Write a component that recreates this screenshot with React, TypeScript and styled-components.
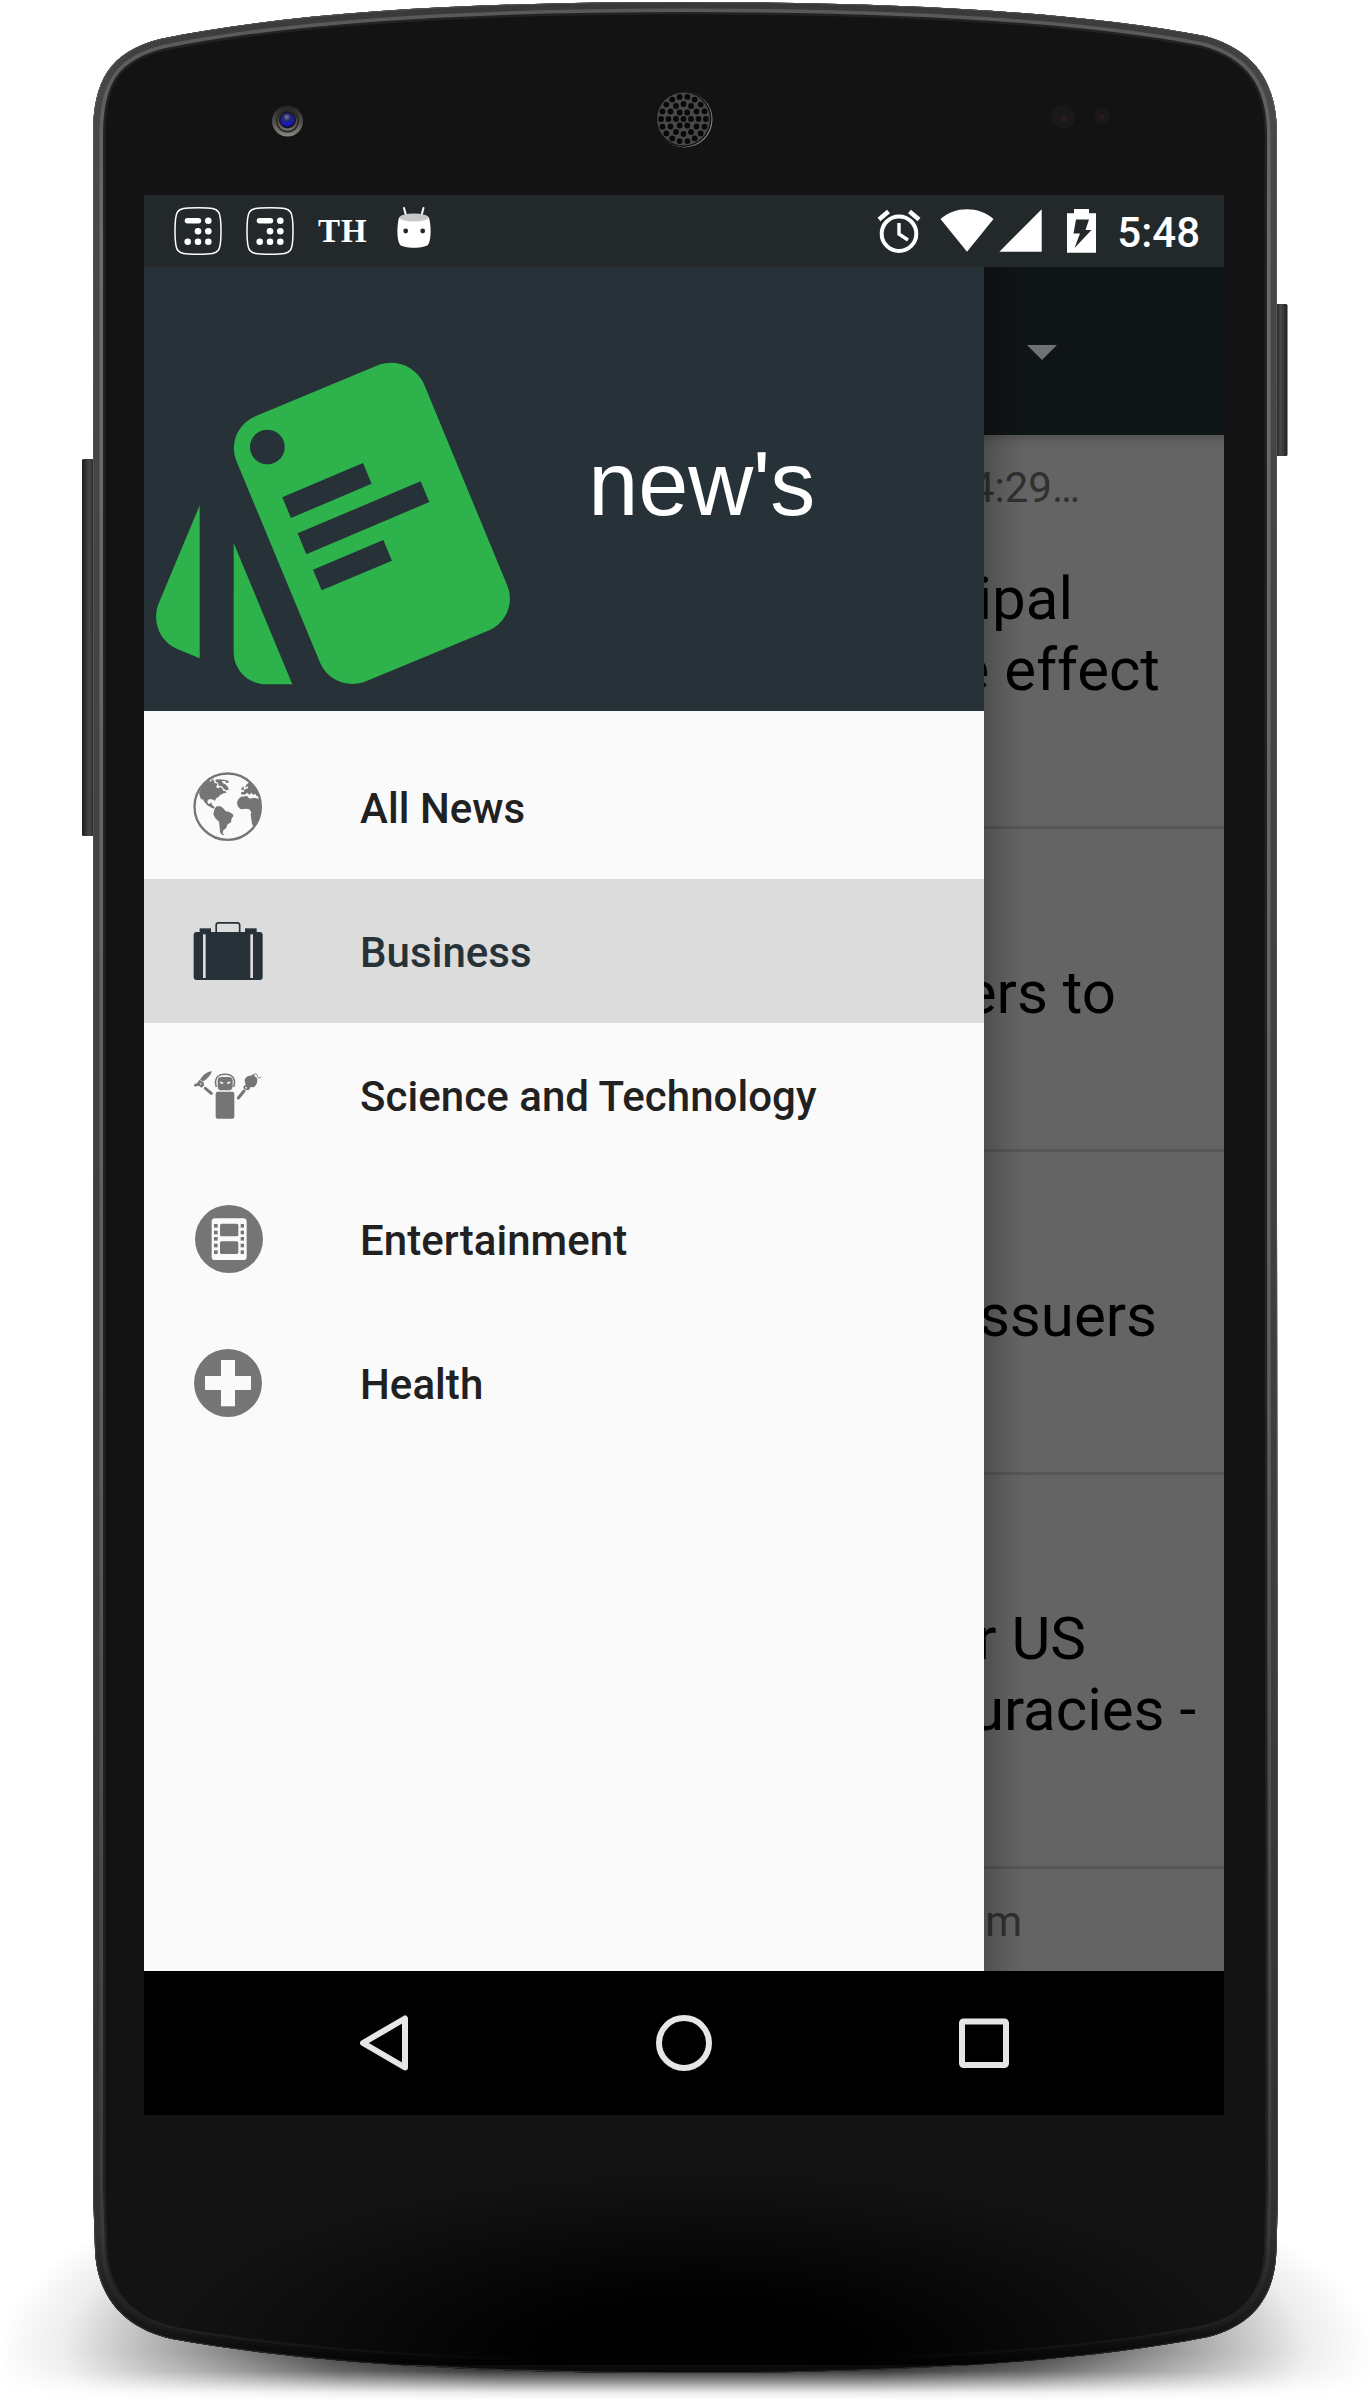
import React from 'react';
import styled, { createGlobalStyle } from 'styled-components';

const GlobalStyle = createGlobalStyle`
  *, *::before, *::after { box-sizing: border-box; }
  body { margin: 0; background: #fff; font-family: Roboto, 'Liberation Sans', sans-serif; }
`;

const Page = styled.main`
  position: relative;
  width: 1370px;
  height: 2405px;
  padding: 195px 146px 290px 144px;
  overflow: hidden;
  background: #fff;
`;

const DeviceArt = styled.svg`
  position: absolute;
  inset: 0;
  width: 1370px;
  height: 2405px;
`;

const Screen = styled.section`
  position: relative;
  display: flex;
  flex-direction: column;
  width: 1080px;
  height: 1920px;
  background: #646464;
`;

const StatusBar = styled.header`
  display: flex;
  justify-content: space-between;
  align-items: center;
  flex: 0 0 72px;
  padding: 0 24px 0 30px;
  background: #23282b;
  color: #fff;
`;

const StatusGroup = styled.div`
  display: flex;
  align-items: center;
  height: 72px;
`;

const StatusIcon = styled.svg<{ $w: number; $ml?: number }>`
  display: block;
  width: ${(p) => p.$w}px;
  height: 72px;
  margin-left: ${(p) => p.$ml ?? 0}px;
`;

const PaperMark = styled.span`
  margin-left: 24px;
  width: 52px;
  font: bold 33px/72px 'Liberation Serif', serif;
  letter-spacing: 1px;
`;

const Clock = styled.time`
  margin-left: 21px;
  font-size: 42px;
  font-weight: 500;
  line-height: 72px;
  padding-top: 3px;
`;

const Workspace = styled.div`
  display: flex;
  flex: 1;
  min-height: 0;
`;

const Drawer = styled.nav`
  flex: 0 0 840px;
  background: #fafafa;
`;

const DrawerHeader = styled.div`
  display: flex;
  height: 444px;
  padding: 95px 0 0 12px;
  background: #273238;
`;

const Logo = styled.svg`
  flex: none;
  width: 354.300px;
  height: 322.700px;
`;

const Brand = styled.h1`
  margin: 69px 0 0 78px;
  font-family: 'Liberation Sans', Arial, sans-serif;
  font-size: 90px;
  font-weight: 400;
  line-height: 106px;
  letter-spacing: -0.1px;
  color: #fff;
`;

const Menu = styled.ul`
  margin: 0;
  padding: 24px 0;
  list-style: none;
`;

const MenuItem = styled.li<{ $active?: boolean }>`
  display: flex;
  align-items: center;
  gap: 96px;
  height: 144px;
  padding: 0 48px;
  font-size: 42px;
  font-weight: 500;
  background: ${(p) => (p.$active ? '#dcdcdc' : 'transparent')};
  color: ${(p) => (p.$active ? '#263238' : '#212121')};
  svg { color: ${(p) => (p.$active ? '#263238' : '#757575')}; }
`;

const MenuLabel = styled.span`
  padding-top: 2px;
  letter-spacing: 0.05px;
`;

const MenuIcon = styled.svg`
  flex: none;
  width: 72px;
  height: 72px;
`;

const Content = styled.div`
  position: relative;
  display: flex;
  flex-direction: column;
  flex: 1;
  min-width: 0;
  overflow: hidden;
  background: #646464;

  &::after {
    content: '';
    position: absolute;
    inset: 0 auto 0 0;
    width: 42px;
    background: linear-gradient(90deg, rgba(0,0,0,0.22), rgba(0,0,0,0.08) 50%, transparent);
  }
`;

const Toolbar = styled.div`
  display: flex;
  align-items: center;
  flex: 0 0 168px;
  padding: 2px 0 0 43px;
  background: #0f1416;
`;

const DropArrow = styled.svg`
  width: 30px;
  height: 15px;
`;

const Feed = styled.div`
  flex: 1;
  min-height: 0;
  overflow: hidden;
  background: linear-gradient(#535353, #606060 8px, #646464 18px);
`;

const Story = styled.article`
  padding: 28px 0 121px;
  border-bottom: 3px solid #575757;
`;

const StoryLine = styled.div<{ $end?: number }>`
  display: flex;
  justify-content: flex-end;
  padding-right: ${(p) => p.$end ?? 0}px;
  white-space: pre;
`;

const StoryMeta = styled(StoryLine)`
  height: 49px;
  margin-bottom: 51px;
  font-size: 42px;
  line-height: 49px;
  color: #303030;
`;

const StoryTitle = styled(StoryLine)`
  font-size: 60px;
  line-height: 71px;
  color: #000;
`;

const NavBar = styled.footer`
  display: flex;
  justify-content: center;
  align-items: center;
  flex: 0 0 144px;
  background: #000;
`;

const NavButton = styled.div`
  display: flex;
  justify-content: center;
  width: 300px;
  svg {
    width: 60px;
    height: 60px;
    fill: none;
    stroke: #e6e6e6;
    stroke-width: 6;
    stroke-linejoin: round;
  }
`;

const BODY =
  'M93 1200 V135 C93 80 110 52 160 39 C300 10 490 2 685 2 C880 2 1070 10 1205 36 C1255 50 1277 82 1277 135 V1200 L1278 2190 L1276.500 2250 C1275 2300 1250 2326 1208 2337 C1080 2362 900 2373 685 2373 C470 2373 300 2362 172 2339 C122 2328 97 2295 95 2250 L93 2190 Z';

const holes: [number, number][] = [[0, 0]];
[[6, 7.5], [12, 15], [18, 22.4]].forEach(([count, radius]) => {
  for (let i = 0; i < count; i++) {
    const a = (i / count) * Math.PI * 2;
    holes.push([Math.cos(a) * radius, Math.sin(a) * radius]);
  }
});

function Device() {
  return (
    <DeviceArt viewBox="0 0 1370 2405" aria-hidden>
      <defs>
        <clipPath id="body"><path d={BODY} /></clipPath>
        <radialGradient id="ground" gradientUnits="userSpaceOnUse" cx="0" cy="0" r="1" gradientTransform="translate(685 2352) scale(690 225)">
          <stop offset="0.3" stopColor="#000" stopOpacity="0.95" />
          <stop offset="0.51" stopColor="#000" stopOpacity="0.74" />
          <stop offset="0.67" stopColor="#000" stopOpacity="0.45" />
          <stop offset="0.8" stopColor="#000" stopOpacity="0.24" />
          <stop offset="0.9" stopColor="#000" stopOpacity="0.07" />
          <stop offset="1" stopColor="#000" stopOpacity="0" />
        </radialGradient>
        <linearGradient id="fade" gradientUnits="userSpaceOnUse" x1="0" x2="0" y1="2352" y2="2400">
          <stop offset="0" stopColor="#fff" />
          <stop offset="0.4" stopColor="#ccc" />
          <stop offset="0.65" stopColor="#666" />
          <stop offset="0.85" stopColor="#151515" />
          <stop offset="1" stopColor="#000" />
        </linearGradient>
        <mask id="groundMask" maskUnits="userSpaceOnUse" x="0" y="2100" width="1370" height="305">
          <rect y="2100" width="1370" height="305" fill="url(#fade)" />
        </mask>
        <radialGradient id="gloom" gradientUnits="userSpaceOnUse" cx="0" cy="0" r="1" gradientTransform="translate(700 2350) scale(540 180)">
          <stop offset="0.3" stopColor="#000" stopOpacity="0.95" />
          <stop offset="1" stopColor="#000" stopOpacity="0" />
        </radialGradient>
        <linearGradient id="rim" x1="0" x2="0" y1="0" y2="1">
          <stop offset="0" stopColor="#383838" />
          <stop offset="0.04" stopColor="#48484a" />
          <stop offset="0.7" stopColor="#3c3c3d" />
          <stop offset="0.94" stopColor="#303030" />
          <stop offset="1" stopColor="#0a0a0a" />
        </linearGradient>
        <linearGradient id="rimLight" x1="0" x2="0" y1="0" y2="1">
          <stop offset="0" stopColor="#58585a" />
          <stop offset="0.1" stopColor="#6c6c70" />
          <stop offset="0.6" stopColor="#5e5e62" />
          <stop offset="0.94" stopColor="#3a3a3a" />
          <stop offset="1" stopColor="#0c0c0c" />
        </linearGradient>
        <linearGradient id="key" x1="0" x2="1">
          <stop offset="0" stopColor="#1c1c1c" />
          <stop offset="0.5" stopColor="#474747" />
          <stop offset="1" stopColor="#202020" />
        </linearGradient>
        <linearGradient id="lens" x1="0" x2="0" y1="0" y2="1">
          <stop offset="0" stopColor="#222" />
          <stop offset="0.5" stopColor="#4c4c4c" />
          <stop offset="1" stopColor="#8a8783" />
        </linearGradient>
        <linearGradient id="lensInner" x1="0" x2="0" y1="0" y2="1">
          <stop offset="0" stopColor="#2c2b29" />
          <stop offset="1" stopColor="#77736d" />
        </linearGradient>
        <radialGradient id="glass" cx="0.45" cy="0.3" r="0.7">
          <stop offset="0" stopColor="#718096" />
          <stop offset="0.4" stopColor="#22266a" />
          <stop offset="0.75" stopColor="#1b16cf" />
          <stop offset="1" stopColor="#10104a" />
        </radialGradient>
      </defs>
      <rect y="2100" width="1370" height="305" fill="url(#ground)" mask="url(#groundMask)" />
      <rect x="82" y="459" width="14" height="377" rx="1.500" fill="url(#key)" />
      <rect x="1274" y="304" width="13.500" height="152" rx="1.500" fill="url(#key)" />
      <path d={BODY} fill="#131313" />
      <g clipPath="url(#body)" fill="none">
        <path d={BODY} stroke="#222223" strokeWidth="25" />
        <path d={BODY} stroke="url(#rimLight)" strokeWidth="20" />
        <path d={BODY} stroke="url(#rim)" strokeWidth="13" />
        <path d={BODY} stroke="#747476" strokeWidth="1.500" strokeOpacity="0.4" />
        <rect x="110" y="2120" width="1150" height="245" fill="url(#gloom)" />
      </g>
      <circle cx="287.500" cy="121" r="15.500" fill="url(#lens)" />
      <circle cx="287.500" cy="121" r="11.500" fill="#2c2a28" />
      <circle cx="287.500" cy="121" r="9.800" fill="url(#lensInner)" />
      <circle cx="287.500" cy="120" r="8.500" fill="#17171c" />
      <circle cx="287.500" cy="120" r="7" fill="url(#glass)" />
      <circle cx="684.500" cy="119.500" r="28" fill="#8a8a8a" />
      <circle cx="683.500" cy="119" r="28" fill="#111" />
      <circle cx="683.500" cy="119" r="26.500" fill="#484848" />
      {holes.map(([x, y], i) => (
        <circle key={i} cx={683.5 + x} cy={119 + y} r="2.900" fill="#080808" />
      ))}
      <circle cx="1063" cy="117" r="12" fill="#191919" />
      <circle cx="1064" cy="119" r="3" fill="#2b1c17" />
      <circle cx="1102" cy="116" r="8" fill="#191919" />
      <circle cx="1102" cy="117" r="2.500" fill="#2b1c17" />
    </DeviceArt>
  );
}

function KeypadIcon({ ml }: { ml?: number }) {
  return (
    <StatusIcon $w={48} $ml={ml} viewBox="0 0 48 72">
      <path d="M24 12.800C38 12.800 42 13.500 44.500 17C46.600 20 47 25 47 36C47 47 46.600 52 44.500 55C42 58.500 38 59.200 24 59.200C10 59.200 6 58.500 3.500 55C1.400 52 1 47 1 36C1 25 1.400 20 3.500 17C6 13.500 10 12.800 24 12.800Z" fill="none" stroke="#fff" strokeWidth="1.500" />
      <g fill="#fff">
        <rect x="10.700" y="23" width="16.500" height="5.400" rx="2.700" />
        <circle cx="34.300" cy="25.700" r="3.300" />
        <circle cx="24" cy="36.200" r="3.300" />
        <circle cx="34.300" cy="36.200" r="3.300" />
        <circle cx="13.700" cy="46.700" r="3.300" />
        <circle cx="24" cy="46.700" r="3.300" />
        <circle cx="34.300" cy="46.700" r="3.300" />
      </g>
    </StatusIcon>
  );
}

const GlobeIcon = () => (
  <MenuIcon viewBox="12 18 216 216" fill="currentColor">
    <circle cx="119" cy="125" r="99.500" fill="none" stroke="currentColor" strokeWidth="7" />
    <path d="M33 84C39 66 52 52 66 46L66 52L72 46L80 49L78 55L86 54L88 60L84 66L90 70L98 66L104 72L106 78L112 78L116 83L106 85L102 88L96 90L92 96L86 98L80 108L77 104L64 102L58 108L60 116L66 116L70 112L72 120L80 126L78 131L68 127L58 121L50 112L44 102L41 104L36 96Z" />
    <path d="M64 45L78 43L76 47ZM82 44L92 43L108 44L121 47L122 53L114 54L112 48L102 48L104 54L112 58L120 66L122 75L113 76L106 70L102 64L92 62L90 54L84 50Z" />
    <path d="M80 131L86 124L98 124L108 132L112 138L124 141L135 148L136 154L131 160L129 172L119 178L114 190L106 196L104 204L109 211L102 209L96 202L95 186L93 170L82 160L76 148Z" />
    <path d="M152 101L159 95L178 93L181 98L188 101L196 98L211 101L218 108L221 124C220 150 208 172 197 186L192 177L190 162L188 150L190 142L184 133L174 131L158 133L149 124L147 112Z" />
    <path d="M159 88L160 81L169 80L167 76L173 72L180 70L180 64L172 68L174 60L184 52L196 62L203 72L210 84L215 96L205 92L202 86L196 90L190 83L184 90L178 83L170 89ZM161 68L166 64L168 72L164 76L160 74Z" />
  </MenuIcon>
);

const BriefcaseIcon = () => (
  <MenuIcon viewBox="12 450 216 216" fill="currentColor">
    <path d="M84.500 504V481Q84.500 473.500 91 473.500H148Q155 473.500 155 481V504" fill="none" stroke="currentColor" strokeWidth="5" />
    <rect x="35" y="490" width="34" height="16" />
    <rect x="171" y="490" width="35" height="16" />
    <rect x="17" y="501" width="207" height="144" rx="9" />
    <rect x="45" y="508" width="8" height="131" fill="#dcdcdc" />
    <rect x="187" y="508" width="8" height="131" fill="#dcdcdc" />
  </MenuIcon>
);

const RobotIcon = () => (
  <MenuIcon viewBox="12 882 216 216" fill="currentColor">
    <rect x="83" y="980" width="56" height="81" rx="6" />
    <path d="M85 966C78 944 86 928 111 928C136 928 144 944 137 966" fill="none" stroke="currentColor" strokeWidth="4.500" />
    <path d="M89 946Q90 936 100 936H122Q133 936 134 946V965Q132 976 122 976H100Q90 976 89 965Z" />
    <path d="M96 949L107 953L104 957L97 955ZM127 949L116 953L119 957L126 955Z" fill="#fafafa" />
    <path d="M52 970L70 985M151 999L168 978" fill="none" stroke="currentColor" strokeLinecap="round" strokeWidth="9" />
    <path d="M36 945C43 931 56 920 72 919C68 932 58 941 47 949ZM34 945L47 952L48 962L40 968L33 962L20 965L18 958L27 955Z" />
    <circle cx="38" cy="957" r="2.500" fill="#fafafa" />
    <path d="M170 949C170 938 178 932 188 932L197 927L200 934L207 939C210 951 205 964 195 967L187 966L184 974L176 976L167 971L166 964L173 960Z" />
    <path d="M196 933C196 924 207 926 208 932C209 941 216 940 220 935" fill="none" stroke="currentColor" strokeWidth="3" />
    <circle cx="174" cy="968" r="2.500" fill="#fafafa" />
  </MenuIcon>
);

const FilmIcon = () => (
  <MenuIcon viewBox="156 489 216 216" fill="currentColor">
    <circle cx="267" cy="597" r="102" />
    <rect x="215" y="535" width="105" height="125" rx="10" fill="#fafafa" />
    <rect x="240" y="551" width="55" height="38" rx="5" />
    <rect x="240" y="604" width="55" height="38" rx="5" />
    {[552, 572, 591, 611, 631].map((y) => (
      <React.Fragment key={y}>
        <rect x="222" y={y} width="11" height="11" />
        <rect x="302" y={y} width="10" height="11" />
      </React.Fragment>
    ))}
  </MenuIcon>
);

const HealthIcon = () => (
  <MenuIcon viewBox="156 921 216 216" fill="currentColor">
    <circle cx="264" cy="1029" r="102" />
    <path d="M243 960H285V1008H333V1050H285V1099H243V1050H195V1008H243Z" fill="#fafafa" />
  </MenuIcon>
);

const menu = [
  { label: 'All News', Icon: GlobeIcon },
  { label: 'Business', Icon: BriefcaseIcon, active: true },
  { label: 'Science and Technology', Icon: RobotIcon },
  { label: 'Entertainment', Icon: FilmIcon },
  { label: 'Health', Icon: HealthIcon },
];

type Line = { text: string; end: number };
const stories: { meta?: Line; title: Line[] }[] = [
  { meta: { text: '4:29…', end: 144 }, title: [{ text: 'ipal', end: 151 }, { text: 'e effect', end: 64 }] },
  { title: [{ text: 'ers to', end: 108 }] },
  { title: [{ text: 'ssuers', end: 67 }] },
  { title: [{ text: 'r US', end: 138 }, { text: 'uracies -', end: 28 }] },
  { meta: { text: 'm', end: 202 }, title: [] },
];

export default function App() {
  return (
    <Page>
      <GlobalStyle />
      <Device />
      <Screen>
        <StatusBar>
          <StatusGroup>
            <KeypadIcon />
            <KeypadIcon ml={24} />
            <PaperMark>TH</PaperMark>
            <StatusIcon $w={36} $ml={26} viewBox="0 0 36 72">
              <path d="M8 13L10.200 21M27.500 13L25.300 21" stroke="#fff" strokeWidth="2" strokeLinecap="round" />
              <path d="M3 22.500C1 30 0.500 43 3.500 49C6 54 30 54 32.500 49C35.500 43 35 30 33 22.500Z" fill="#fff" />
              <ellipse cx="18" cy="22.500" rx="14.500" ry="4" fill="#c6c7c8" />
              <circle cx="9.700" cy="36" r="2.400" fill="#23282b" />
              <circle cx="26.700" cy="36" r="2.400" fill="#23282b" />
            </StatusIcon>
          </StatusGroup>
          <StatusGroup>
            <StatusIcon $w={44} viewBox="0 0 44 72">
              <g fill="none" stroke="#fff">
                <circle cx="22" cy="38.700" r="17.300" strokeWidth="4" />
                <path d="M22 28V39L31 45" strokeWidth="3.400" />
                <path d="M2 24.500L11.500 16.500M42 24.500L32.500 16.500" strokeWidth="4.500" />
              </g>
            </StatusIcon>
            <StatusIcon $w={54} $ml={19} viewBox="0 0 54 72">
              <path d="M0.500 24C15 11 39 11 53.500 24L27 56.700Z" fill="#fff" />
            </StatusIcon>
            <StatusIcon $w={43} $ml={5} viewBox="0 0 43 72">
              <path d="M0.300 56.700L42.700 14.300V56.700Z" fill="#fff" />
            </StatusIcon>
            <StatusIcon $w={29} $ml={25} viewBox="0 0 29 72">
              <path d="M0 18.300H7V14H22V18.300H29V57.700H0Z" fill="#fff" />
              <path d="M9 24.500H22L18.500 35H24.500L7.500 53L13 38.500H6.500Z" fill="#23282b" />
            </StatusIcon>
            <Clock>5:48</Clock>
          </StatusGroup>
        </StatusBar>
        <Workspace>
          <Drawer>
            <DrawerHeader>
              <Logo viewBox="48 68 1063 968" fill="#2db24c">
                <path
                  fillRule="evenodd"
                  d="M346 231L710 79C766 56 826 80 851 132L1101 736C1124 790 1100 848 1050 872L678 1026C624 1048 564 1024 541 972L289 364C268 312 294 253 346 231ZM382 271A52 52 0 1 0 382.100 271ZM427 474L669 371L695 433L453 536ZM473 582L842 426L868 488L499 645ZM519 691L730 602L756 664L545 753Z"
                />
                <path d="M179 498V957L112 929C58 906 36 848 55 795Z" />
                <path d="M281 611L457 1035H380C324 1035 281 992 281 937Z" />
              </Logo>
              <Brand>new's</Brand>
            </DrawerHeader>
            <Menu>
              {menu.map(({ label, Icon, active }) => (
                <MenuItem key={label} $active={active}>
                  <Icon />
                  <MenuLabel>{label}</MenuLabel>
                </MenuItem>
              ))}
            </Menu>
          </Drawer>
          <Content>
            <Toolbar>
              <DropArrow viewBox="0 0 30 15"><path d="M0 0H30L15 15Z" fill="#6f7172" /></DropArrow>
            </Toolbar>
            <Feed>
              {stories.map((story, i) => (
                <Story key={i}>
                  <StoryMeta $end={story.meta?.end}>{story.meta?.text}</StoryMeta>
                  {story.title.map((line) => (
                    <StoryTitle key={line.text} $end={line.end}>{line.text}</StoryTitle>
                  ))}
                </Story>
              ))}
            </Feed>
          </Content>
        </Workspace>
        <NavBar>
          <NavButton><svg viewBox="0 0 60 60"><path d="M51 5.500V54.500L9 30Z" /></svg></NavButton>
          <NavButton><svg viewBox="0 0 60 60"><circle cx="30" cy="30" r="25" /></svg></NavButton>
          <NavButton><svg viewBox="0 0 60 60"><rect x="8" y="8.500" width="44" height="43.500" rx="1.500" /></svg></NavButton>
        </NavBar>
      </Screen>
    </Page>
  );
}
